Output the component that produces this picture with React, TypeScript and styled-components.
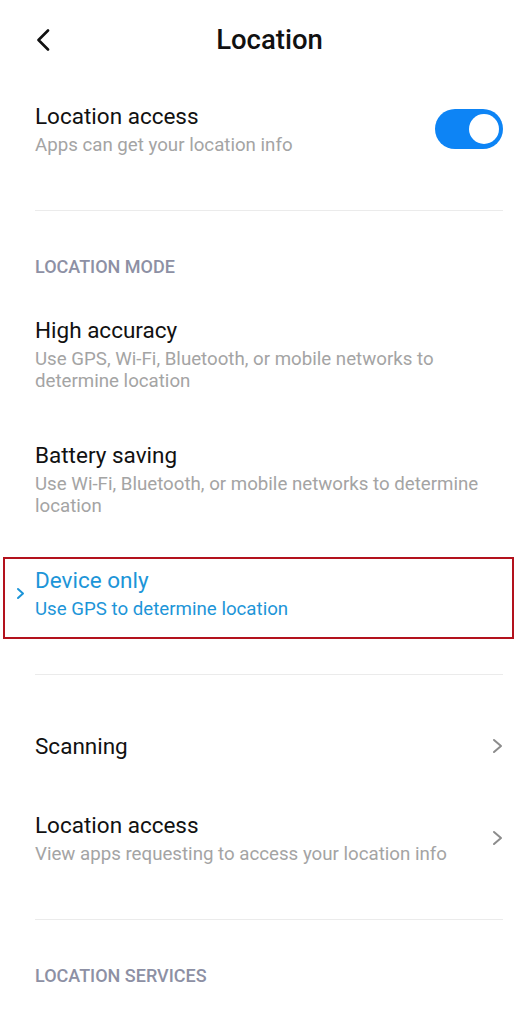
import React from 'react';
import styled, { createGlobalStyle } from 'styled-components';

const GlobalStyle = createGlobalStyle`
  html, body {
    margin: 0;
    padding: 0;
    background: #ffffff;
  }
  body {
    font-family: Roboto, 'Noto Sans', 'Liberation Sans', sans-serif;
    -webkit-font-smoothing: antialiased;
  }
`;

const Page = styled.div`
  width: 525px;
  min-height: 1016px;
  background: #ffffff;
  display: flex;
  flex-direction: column;
  overflow: hidden;
`;

const Header = styled.header`
  display: grid;
  grid-template-columns: 74px 1fr 60px;
  align-items: center;
  padding-top: 21px;
  height: 38px;
`;

const BackButton = styled.button`
  border: 0;
  background: none;
  padding: 0 0 0 36px;
  display: flex;
  align-items: center;
  height: 38px;
  cursor: pointer;
`;

const Title = styled.h1`
  margin: 0;
  text-align: center;
  font-size: 27.5px;
  line-height: 38px;
  font-weight: 500;
  color: #111111;
`;

const Row = styled.div<{ $top: number }>`
  display: flex;
  align-items: center;
  justify-content: space-between;
  padding: 0 22px 0 35px;
  margin-top: ${(p) => p.$top}px;
`;

const TextBlock = styled.div`
  display: flex;
  flex-direction: column;
`;

const ItemTitle = styled.div<{ $active?: boolean }>`
  font-size: 22.5px;
  line-height: 30px;
  color: ${(p) => (p.$active ? '#1d95d8' : '#111111')};
`;

const ItemSub = styled.div<{ $active?: boolean }>`
  margin-top: 3px;
  font-size: 18.7px;
  line-height: 22px;
  color: ${(p) => (p.$active ? '#1d95d8' : '#a4a4a4')};
`;

const Toggle = styled.div`
  width: 68px;
  height: 40px;
  border-radius: 20px;
  background: #0d84f5;
  display: flex;
  align-items: center;
  justify-content: flex-end;
  padding-right: 4px;
  box-sizing: border-box;
`;

const Thumb = styled.div`
  width: 30px;
  height: 30px;
  border-radius: 50%;
  background: #ffffff;
`;

const Divider = styled.hr<{ $top: number }>`
  border: 0;
  height: 1px;
  background: #ebebeb;
  margin: ${(p) => p.$top}px 22px 0 35px;
`;

const SectionLabel = styled.div<{ $top: number }>`
  margin-top: ${(p) => p.$top}px;
  padding-left: 35px;
  font-size: 18px;
  line-height: 22px;
  font-weight: 500;
  color: #8d90a4;
`;

const Highlight = styled.div`
  margin: 40px 11px 0 3px;
  border: 2.5px solid #b3121d;
  padding: 5.5px 0 17.5px 0;
  display: flex;
  align-items: center;
`;

const MarkSlot = styled.div`
  width: 30px;
  display: flex;
  justify-content: center;
  padding-top: 2px;
`;

const Chevron = ({ color, w, h, stroke }: { color: string; w: number; h: number; stroke: number }) => (
  <svg width={w} height={h} viewBox={`0 0 ${w} ${h}`} fill="none">
    <path
      d={`M${stroke} ${stroke} L${w - stroke} ${h / 2} L${stroke} ${h - stroke}`}
      stroke={color}
      strokeWidth={stroke}
      strokeLinecap="round"
      strokeLinejoin="round"
    />
  </svg>
);

const BackIcon = () => (
  <svg width="14" height="22" viewBox="0 0 14 22" fill="none">
    <path d="M12 1.5 L2.5 11 L12 20.5" stroke="#111" strokeWidth="2.6" strokeLinecap="round" strokeLinejoin="round" />
  </svg>
);

export default function App() {
  return (
    <Page>
      <GlobalStyle />
      <Header>
        <BackButton aria-label="Back">
          <BackIcon />
        </BackButton>
        <Title>Location</Title>
        <span />
      </Header>

      <Row $top={42}>
        <TextBlock>
          <ItemTitle>Location access</ItemTitle>
          <ItemSub>Apps can get your location info</ItemSub>
        </TextBlock>
        <Toggle>
          <Thumb />
        </Toggle>
      </Row>

      <Divider $top={54} />

      <SectionLabel $top={45}>LOCATION MODE</SectionLabel>

      <Row $top={37}>
        <TextBlock>
          <ItemTitle>High accuracy</ItemTitle>
          <ItemSub>
            Use GPS, Wi-Fi, Bluetooth, or mobile networks to
            <br />
            determine location
          </ItemSub>
        </TextBlock>
      </Row>

      <Row $top={48}>
        <TextBlock>
          <ItemTitle>Battery saving</ItemTitle>
          <ItemSub>
            Use Wi-Fi, Bluetooth, or mobile networks to determine
            <br />
            location
          </ItemSub>
        </TextBlock>
      </Row>

      <Highlight>
        <MarkSlot>
          <Chevron color="#1d95d8" w={9} h={13} stroke={2} />
        </MarkSlot>
        <TextBlock>
          <ItemTitle $active>Device only</ItemTitle>
          <ItemSub $active>Use GPS to determine location</ItemSub>
        </TextBlock>
      </Highlight>

      <Divider $top={35} />

      <Row $top={56}>
        <ItemTitle>Scanning</ItemTitle>
        <Chevron color="#8c8c8c" w={11} h={16} stroke={2} />
      </Row>

      <Row $top={49}>
        <TextBlock>
          <ItemTitle>Location access</ItemTitle>
          <ItemSub>View apps requesting to access your location info</ItemSub>
        </TextBlock>
        <Chevron color="#8c8c8c" w={11} h={16} stroke={2} />
      </Row>

      <Divider $top={54} />

      <SectionLabel $top={45}>LOCATION SERVICES</SectionLabel>
    </Page>
  );
}
